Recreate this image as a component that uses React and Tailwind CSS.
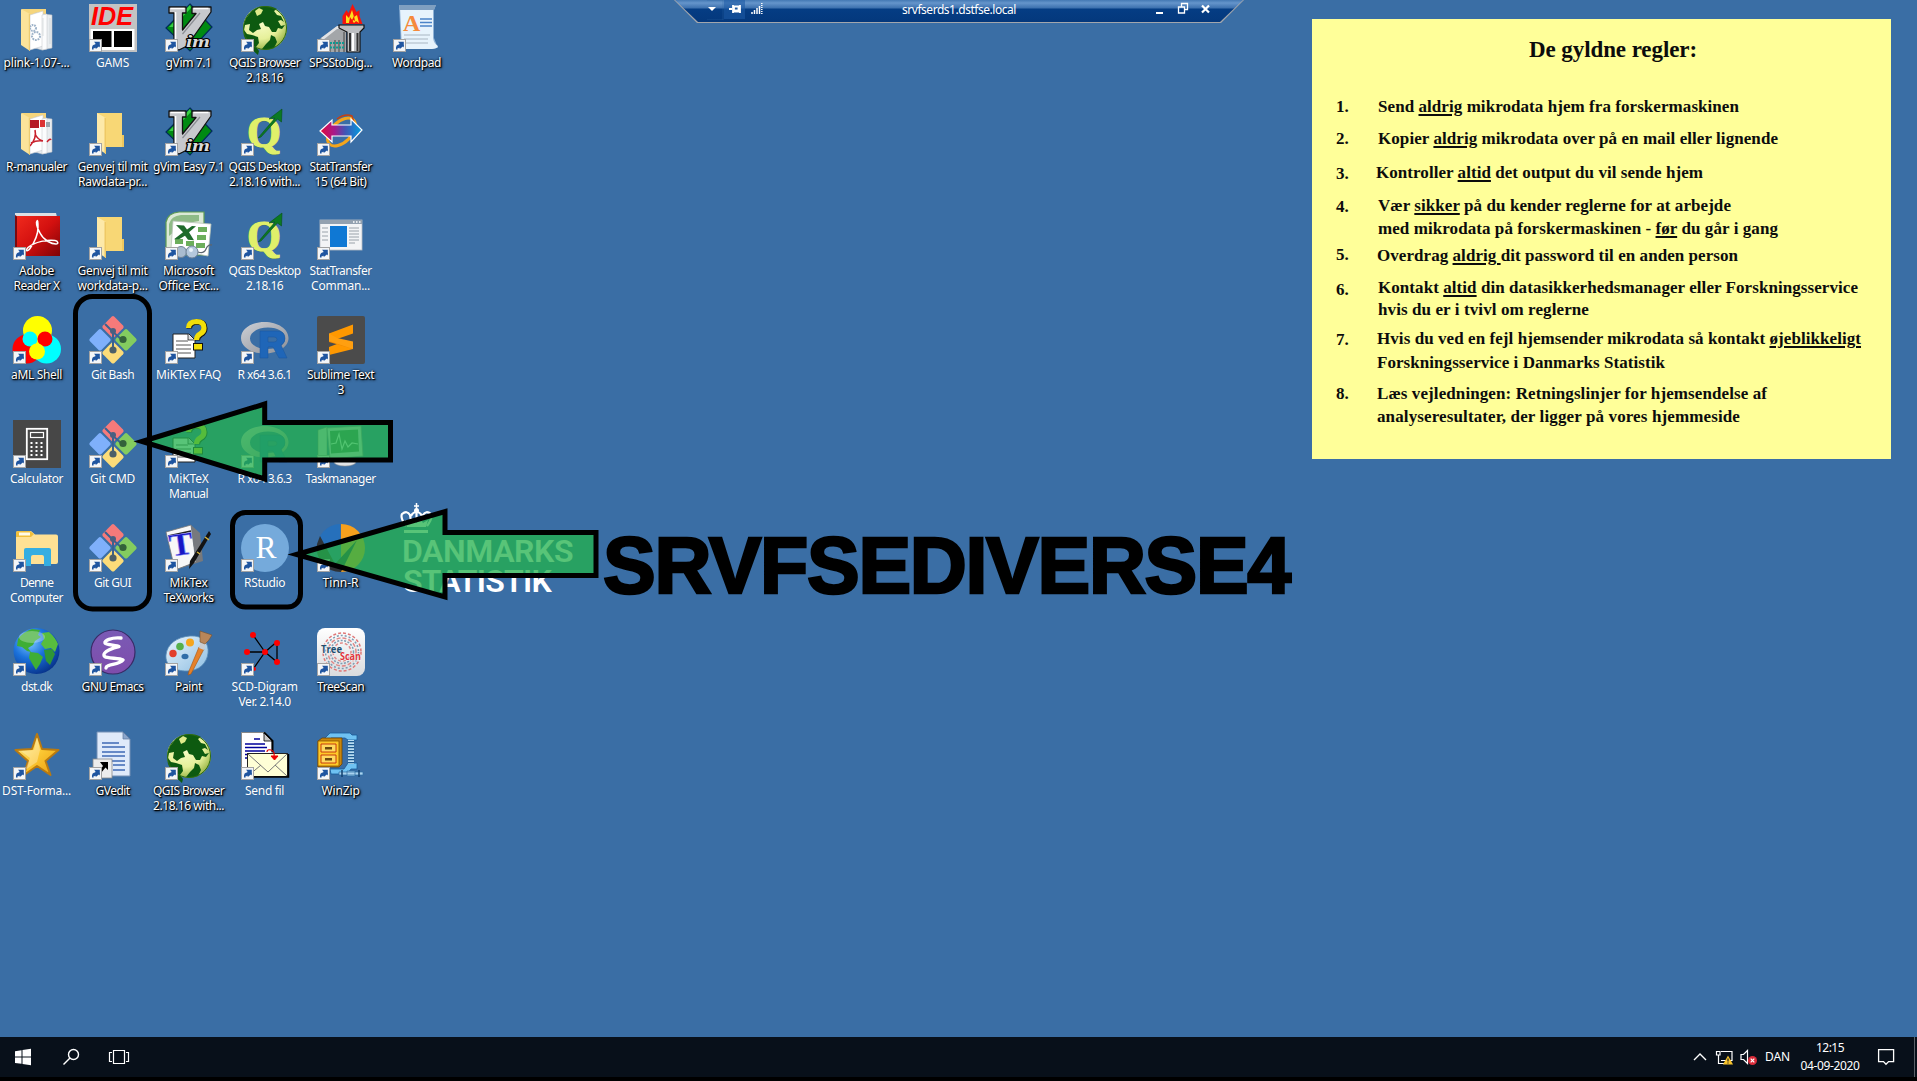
import React, { useLayoutEffect, useRef } from "react";

// Tracks the text so that it spans the given width.
function Fit({ w, className = "", children }) {
  const ref = useRef(null);
  useLayoutEffect(() => {
    const el = ref.current;
    el.style.letterSpacing = "0px";
    const natural = el.getBoundingClientRect().width;
    const n = el.textContent.length;
    el.style.letterSpacing = `${(w - natural) / n}px`;
  }, [w]);
  return (
    <span ref={ref} className={`inline-block whitespace-nowrap ${className}`}>
      {children}
    </span>
  );
}

const Svg = ({ children }) => (
  <svg viewBox="0 0 48 48" width="48" height="48" className="block overflow-visible">
    {children}
  </svg>
);

const Badge = () => (
  <g>
    <rect x="0.5" y="35.5" width="12" height="12" fill="#f4f6f8" stroke="#a3a3a3" />
    <path d="M3 45.5C2.6 42 4 40.3 6.6 40.2V38L11 41.6L6.8 45V43C5 43 4.4 44 4.6 45.5Z" fill="#1f55a0" />
    <path d="M5 37.8h5.8v5.6L8.8 41.5 6 44.5 4.2 43 7 40Z" fill="#1f55a0" />
  </g>
);

const FolderBase = () => (
  <g>
    <path d="M8 5h25v22h2v12H8Z" fill="#f8d775" />
    <path d="M8 5l9 5v36l-9-6Z" fill="#fde9a9" />
    <path d="M15.5 9.5l1.5.8v35.6l-1.5-1Z" fill="#efc965" />
    <path d="M33 27h2v12h-2Z" fill="#efc75e" />
  </g>
);

const FolderDocs = ({ pdf }) => (
  <Svg>
    <path d="M9 5h24v36H9Z" fill="#f5d57c" />
    <path d="M22 9l17 2v33l-10 2-7-2Z" fill="#e9edf0" stroke="#b9bec4" strokeWidth=".6" />
    <path d="M17 11l13-4v35l-13 4Z" fill="#fff" stroke="#c9cdd1" strokeWidth=".6" />
    <path d="M29 11l5-1v35l-5 1Z" fill="#fbfcfd" stroke="#c0c5ca" strokeWidth=".5" />
    {pdf ? (
      <g fill="none" stroke="#c8202c">
        <rect x="17" y="12" width="9" height="8" fill="#b51a26" stroke="none" />
        <rect x="27" y="12" width="5" height="7" fill="#d33" stroke="none" />
        <path d="M22 22q2 8-5 16M22 26q3 6 8 7M18 35q6-3 12-2" strokeWidth="1.6" />
        <path d="M34 34q3-4 4-2" strokeWidth="1.4" />
        <rect x="33" y="14" width="4" height="5" fill="#9aa3ab" stroke="none" />
      </g>
    ) : (
      <g fill="none" stroke="#9db2c8" strokeWidth="2">
        <circle cx="20" cy="24" r="3" strokeDasharray="1.6 .9" />
        <circle cx="23" cy="32" r="4" strokeDasharray="1.8 .9" />
        <path d="M30 14v18M37 14v26" stroke="#c6ccd2" strokeWidth=".6" />
      </g>
    )}
    <path d="M8 5l9 5v37l-9-6Z" fill="#fce39a" />
    <path d="M15.8 9.5l1.2.8v36.6l-1.2-.8Z" fill="#eccb72" />
  </Svg>
);

const Folder = () => (
  <Svg>
    <FolderBase />
    <Badge />
  </Svg>
);

const Gams = () => (
  <Svg>
    <rect width="48" height="48" fill="#c3c3c3" />
    <text x="2" y="21" fontFamily="Liberation Sans" fontStyle="italic" fontWeight="700" fontSize="25" fill="#f00" textLength="42" lengthAdjust="spacingAndGlyphs">IDE</text>
    <rect x="1.5" y="25" width="44" height="21" fill="#fff" />
    <rect x="4" y="27" width="18.5" height="16" fill="#000" />
    <rect x="25" y="27" width="18" height="16" fill="#000" />
    <Badge />
  </Svg>
);

const Vim = () => (
  <Svg>
    <path d="M25 0L47 23 25 47 1 24Z" fill="#008a12" stroke="#002b5a" strokeWidth="1.2" />
    <path d="M25 1L4 23h4L26 4Z" fill="#39d145" />
    <path d="M4 3h17v6h-3.500v17L31 9.500h-4V3h19v5L22 42l-8 4-5-2V9H4Z" fill="#c7c9cd" stroke="#111" strokeWidth="1.3" strokeLinejoin="round" />
    <path d="M5.5 4.500h14M10.500 8v32M28.500 4.500h15" stroke="#fff" strokeWidth="1.6" />
    <path d="M17.500 30L35 9" stroke="#8b8e93" strokeWidth="1.2" />
    <text x="21" y="42.500" fontFamily="Liberation Serif" fontStyle="italic" fontWeight="700" fontSize="17" fill="#dadada" stroke="#000" strokeWidth="2" paintOrder="stroke" textLength="24" lengthAdjust="spacingAndGlyphs">im</text>
    <Badge />
  </Svg>
);

const QGlobe = () => (
  <Svg>
    <defs>
      <radialGradient id="qg" cx=".4" cy=".3" r=".75">
        <stop offset="0" stopColor="#fbffcf" />
        <stop offset=".6" stopColor="#e6f09a" />
        <stop offset="1" stopColor="#8fae3a" />
      </radialGradient>
    </defs>
    <circle cx="24" cy="24" r="22" fill="url(#qg)" />
    <path d="M10 8Q16 2 24 2q7 0 12 3l-3 2 3 4 4 1 3 6-3-2-3 1 3 5 4-1-3 4-4-1-2 4-4 0-3-5-4-1-2-4-4 2 2 5-4 1-4 3-4-3 1-6-5 1-1 5 3 4 5 1 6 2 1 6-3 4 3 4-1 4Q8 44 3 32 1 22 5 14Z" fill="#0d5a10" />
    <path d="M30 31l4 2 2 5-3 6q-7 3-12 1l4-5 4-4Z" fill="#0d5a10" />
    <path d="M14 7l4-3 4 2-2 4-4 2Z" fill="#dfeb8a" />
    <circle cx="24" cy="24" r="21.500" fill="none" stroke="#2c6a14" strokeWidth="1" />
    <Badge />
  </Svg>
);

const QDesk = () => (
  <Svg>
    <text x="6.500" y="40" fontFamily="Liberation Serif" fontWeight="700" fontSize="44" fill="#4e6b1c" opacity=".55" textLength="34" lengthAdjust="spacingAndGlyphs">Q</text>
    <text x="6" y="39" fontFamily="Liberation Serif" fontWeight="700" fontSize="44" fill="#e0f06a" stroke="#e0f06a" strokeWidth="1.200" textLength="34" lengthAdjust="spacingAndGlyphs">Q</text>
    <path d="M17 30L34 10l-6 1L41 1l-.5 13-4-3L20 29Z" fill="#0b7a22" stroke="#065015" strokeWidth=".6" />
    <Badge />
  </Svg>
);

const Spss = () => (
  <Svg>
    <path d="M0 37L19 23h10v25H0Z" fill="#a3a6a9" />
    <path d="M4 34L20 22h8v3H20L6 36Z" fill="#e2e3e5" />
    <path d="M13 38v10M18 36v12M22 36v12M27 28v20" stroke="#555" strokeWidth="1.2" />
    <path d="M13 39h14M13 43.500h14" stroke="#0c9a90" strokeWidth="2" strokeDasharray="2 1" />
    <path d="M22 21h25v3l-4 4v20H30V28l-8-4Z" fill="#bdbfc2" stroke="#111" strokeWidth="1.2" />
    <path d="M33 29v18M40.500 29v18" stroke="#333" strokeWidth="2" />
    <path d="M36 29v18" stroke="#fff" strokeWidth="2" />
    <path d="M25.500 20l0-8 4-6 2 3 4-9 4 8 3-2 0 6 3 8Z" fill="#f5150c" />
    <path d="M29 19l0-8 3 3 3-8 2 7 3-2 2 8-3-2-2 2-3-4-2 4Z" fill="#ffdf1c" />
    <path d="M32 19l1-6 2 3 2-4 1 5-2-1-1 3Z" fill="#f5150c" />
    <Badge />
  </Svg>
);

const Wordpad = () => (
  <Svg>
    <path d="M6 1h37l-2 5v28l4 10H8Z" fill="#8fb2d6" />
    <path d="M7 3h33v31q1 6 5 8-1 3-6 3H9Z" fill="#e7f3fc" />
    <path d="M6 1h37l-2 5H7Z" fill="#7f9fc0" />
    <text x="10" y="27" fontFamily="Liberation Serif" fontWeight="700" fontSize="24" fill="#f58a3c">A</text>
    <path d="M27 15h12M27 18.500h12M27 22h12" stroke="#4b84c8" strokeWidth="1.6" />
    <path d="M11 31h26M11 35h24M13 39h22" stroke="#a9b6c2" strokeWidth="1" />
    <Badge />
  </Svg>
);

const StatTransfer = () => (
  <Svg>
    <defs>
      <linearGradient id="sa">
        <stop offset="0" stopColor="#e3093a" />
        <stop offset=".35" stopColor="#a51a8c" />
        <stop offset=".6" stopColor="#3f55b5" />
        <stop offset="1" stopColor="#009fe0" />
      </linearGradient>
    </defs>
    <ellipse cx="24.500" cy="24" rx="17" ry="10" fill="none" stroke="#f3a51c" strokeWidth="3" transform="rotate(-45 24.500 24)" />
    <path d="M20 11q8-6 15-3l2 6" fill="none" stroke="#c8400f" strokeWidth="1.4" />
    <path d="M3 23L15 12v5h19v-6l11 11-11 12v-6H15v6Z" fill="url(#sa)" stroke="#fff" strokeWidth="1.2" />
    <Badge />
  </Svg>
);

const Adobe = () => (
  <Svg>
    <defs>
      <linearGradient id="ad" x1="0" y1="0" x2="1" y2="1">
        <stop offset="0" stopColor="#f02a1d" />
        <stop offset=".5" stopColor="#d3100f" />
        <stop offset="1" stopColor="#7d0307" />
      </linearGradient>
    </defs>
    <path d="M2 1h41l1 4H5v38H2Z" fill="#dce0e4" />
    <path d="M2 3l3 2v37l-3-2Z" fill="#7b0a0e" />
    <rect x="4" y="4" width="43" height="40" fill="url(#ad)" />
    <path d="M24 9c-2 3 1 8 3 12 4 8 12 11 16 11 3 0 2-3-1-3.500-7-1-20 1-27 7-3 3-1 5 2 1 5-7 8-15 8-21 0-6-.5-8-1-6.500Z" fill="none" stroke="#fff" strokeWidth="1.500" />
    <Badge />
  </Svg>
);

const Excel = () => (
  <Svg>
    <path d="M1 43V10Q3 1 14 0h25v43Z" fill="#dbe9d6" stroke="#5e9c52" strokeWidth="1.2" />
    <path d="M4 24V12q2-8 12-9h18v6Q20 10 4 24Z" fill="#8fbb87" />
    <path d="M8 9l38 3-3 32-37-7Z" fill="#fff" stroke="#b8c4b6" strokeWidth=".8" />
    <path d="M33 15h9v5h-9ZM32 23h9v5h-9ZM31 31h9v5h-9ZM21 29h8v5h-8ZM10 27h8v5h-8Z" fill="#6cae5c" />
    <path d="M11 13l8 .5 3 4 5-3.500 4 .2-7 6 5 8-6-.5-3-4-6 3.500H9l9-7Z" fill="#1f6b2c" />
    <path d="M18 38h15" stroke="#a5adb5" strokeWidth="2" />
    <circle cx="16" cy="40" r="5.500" fill="#a9bcd0" stroke="#6f8298" />
    <circle cx="27" cy="40" r="6" fill="#b4c8dd" stroke="#6f8298" />
    <circle cx="26" cy="38" r="2" fill="#eaf3fb" />
    <path d="M33 40q6 2 8-3t6-4" fill="none" stroke="#5c6670" strokeWidth="1.300" />
    <Badge />
  </Svg>
);

const Command = () => (
  <Svg>
    <rect x="3" y="8" width="42" height="30" fill="#f3f4f6" stroke="#b6bcc4" strokeWidth=".8" />
    <rect x="3" y="8" width="42" height="4" fill="#93a1b0" />
    <path d="M36 10h1.500M39 10h1.500M42 10h1.500" stroke="#fff" strokeWidth="1.500" />
    <rect x="13" y="14" width="17" height="21" fill="#0f78d4" />
    <path d="M5 16h6M5 20h6M5 24h6M5 28h6M32 16h10M32 19h10M32 22h10M32 25h10M32 28h10M32 31h6" stroke="#9aa2aa" strokeWidth="1" />
    <Badge />
  </Svg>
);

const Aml = () => (
  <Svg>
    <circle cx="14" cy="33" r="14.500" fill="#f00" />
    <circle cx="33.500" cy="33" r="14.500" fill="#0ff" />
    <circle cx="24.500" cy="14.500" r="14.500" fill="#ff0" />
    <circle cx="17" cy="23" r="7.500" fill="#0ff" />
    <circle cx="32" cy="23" r="7.500" fill="#f00" />
    <circle cx="24" cy="35.500" r="8" fill="#ff0" />
    <Badge />
  </Svg>
);

const Git = () => (
  <Svg>
    <g transform="rotate(45 24 24)">
      <rect x="6.600" y="6.600" width="16.200" height="16.200" rx="2" fill="#f67a7a" />
      <rect x="25" y="6.600" width="16.200" height="16.200" rx="2" fill="#84cc5f" />
      <rect x="6.600" y="25" width="16.200" height="16.200" rx="2" fill="#7fb0fb" />
      <rect x="25" y="25" width="16.200" height="16.200" rx="2" fill="#fcdc79" />
    </g>
    <path d="M16 8l8 8v16M24 16l8 7" stroke="#3a6290" strokeWidth="2" fill="none" />
    <circle cx="24" cy="15" r="3" fill="#4a5f80" />
    <circle cx="34" cy="23.500" r="3.600" fill="#34623a" />
    <circle cx="24" cy="34" r="3.600" fill="#4d6068" />
    <Badge />
  </Svg>
);

const Miktex = () => (
  <Svg>
    <path d="M8 18h16l6 6v18H8Z" fill="#fff" stroke="#222" strokeWidth="1" />
    <path d="M23 18v6h6" fill="#ddd" stroke="#222" strokeWidth=".8" />
    <path d="M11 25h12M11 29h15M11 33h15M11 37h15" stroke="#555" strokeWidth="1" />
    <path d="M23.500 12q0-6 8-6.500 7.500 0 7.500 6.500 0 4-4 6-3.500 2-3.500 6" transform="translate(.8 .6)" fill="none" stroke="#111" strokeWidth="5.500" />
    <path d="M23.500 12q0-6 8-6.500 7.500 0 7.500 6.500 0 4-4 6-3.500 2-3.500 6" fill="none" stroke="#f2df08" strokeWidth="5.200" />
    <rect x="28.500" y="27.500" width="9" height="6.500" fill="#f2df08" stroke="#111" strokeWidth="1" />
    <Badge />
  </Svg>
);

const RLogo = () => (
  <Svg>
    <defs>
      <linearGradient id="rg" x1="0" y1="0" x2="1" y2="1">
        <stop offset="0" stopColor="#cdd0d6" />
        <stop offset="1" stopColor="#8d9097" />
      </linearGradient>
    </defs>
    <path fillRule="evenodd" d="M23.500 6C37 6 47.500 13 47.500 22S37 37.500 23.500 37.500 0 31 0 22 10 6 23.500 6ZM27 11.500C17 11.500 9 16 9 22.500S17 33 27 33s17-3.500 17-10.500-7-11-17-11Z" fill="url(#rg)" />
    <path fillRule="evenodd" d="M19 15h17q8 0 8 7.500 0 4.500-4 6.500l6 13h-8l-6-11h-5v11h-8ZM27 21v5h6q3 0 3-2.500T33 21Z" fill="#1f66b8" stroke="#1a569d" strokeWidth=".5" />
    <Badge />
  </Svg>
);

const Sublime = () => (
  <Svg>
    <rect width="48" height="48" rx="2" fill="#4b4b4b" />
    <path d="M12 17.500L36 8.500v9l-16 5.500 16 5v5L12 39v-8l16-6-16-4.500Z" fill="#ff9800" />
    <path d="M12 20.500L36 28v5L12 26Z" fill="#f08a00" />
    <path d="M12 17.500v7.500l24 8v-7.500L20 22Z" fill="#ff9f10" />
    <Badge />
  </Svg>
);

const Calculator = () => (
  <Svg>
    <rect width="48" height="48" fill="#474747" />
    <rect x="13.800" y="8.800" width="20.400" height="30.400" fill="none" stroke="#fff" strokeWidth="1.800" />
    <rect x="17.500" y="12.500" width="13" height="5" fill="none" stroke="#fff" strokeWidth="1.200" />
    <path d="M17 23h15M17 27h15M17 31h15M17 35h15" stroke="#fff" strokeWidth="2" strokeDasharray="2 3" strokeDashoffset="-.5" />
    <Badge />
  </Svg>
);

const TaskMgr = () => (
  <Svg>
    <path d="M1 10l9-3v32l-9-2Z" fill="#cfd3d6" stroke="#777" strokeWidth=".6" />
    <path d="M10 8l34-2 2 30-33 3Z" fill="#d6dadd" stroke="#889" strokeWidth=".8" />
    <path d="M13 11l28-1.500 1 22-28 2Z" fill="#4d7f5a" />
    <path d="M14 24l5-1 3-9 3 15 3-8 3 6 4-4 6 1" fill="none" stroke="#dfffe0" strokeWidth="1.200" />
    <ellipse cx="28" cy="42" rx="11" ry="4" fill="#e3e5e7" stroke="#999" strokeWidth=".6" />
    <Badge />
  </Svg>
);

const Computer = () => (
  <Svg>
    <path d="M3 9q0-2 2-2h13l4 3.500h21q2 0 2 2V38q0 2-2 2H5q-2 0-2-2Z" fill="#ffe194" />
    <path d="M3 9q0-2 2-2h12l4 3-3 3H3Z" fill="#f0bf3c" />
    <rect x="6" y="8.500" width="11" height="3" fill="#fffbe8" />
    <path d="M11 42V26q0-2 2-2h23q2 0 2 2v16h-7v-9q0-2-2-2h-9q-2 0-2 2v9Z" fill="#35aee2" />
    <Badge />
  </Svg>
);

const TexWorks = () => (
  <Svg>
    <path d="M1 8L26 1l5 37-21 8Z" fill="#f7f7f7" stroke="#777" strokeWidth=".8" />
    <path d="M26 1l9 8 3 28-28 9 21-8Z" fill="#77797d" />
    <path d="M3 12l23-5" stroke="#222" strokeWidth="1.500" />
    <text x="4" y="31" fontFamily="Liberation Serif" fontWeight="700" fontSize="32" fill="#1717c4" stroke="#8f8ff5" strokeWidth=".6" transform="rotate(-8 15 20)" textLength="24" lengthAdjust="spacingAndGlyphs">T</text>
    <path d="M44 7l2 3-17 29-5 6 1-8Z" fill="#131313" />
    <path d="M40 13l4 3M32 28l3 2" stroke="#d8b23a" strokeWidth="1.500" />
    <Badge />
  </Svg>
);

const RStudio = () => (
  <Svg>
    <circle cx="24" cy="24" r="24" fill="#75aadb" />
    <text x="14.500" y="33.500" fontFamily="Liberation Serif" fontSize="32" fill="#fff" textLength="21" lengthAdjust="spacingAndGlyphs">R</text>
    <Badge />
  </Svg>
);

const TinnR = () => (
  <Svg>
    <path d="M23 0A24 24 0 0 0 0 24L23 20Z" fill="#2670bb" />
    <path d="M24 0A24 24 0 0 1 48 24 24 24 0 0 1 24 48Z" fill="#f7a01d" />
    <path d="M0 20l3-8L18 40 40 16 24 48A24 24 0 0 1 0 20Z" fill="#2e3236" />
    <Badge />
  </Svg>
);

const DstGlobe = () => (
  <Svg>
    <defs>
      <radialGradient id="dg" cx=".35" cy=".3" r=".8">
        <stop offset="0" stopColor="#7cc8ff" />
        <stop offset=".45" stopColor="#1b72dc" />
        <stop offset="1" stopColor="#042a80" />
      </radialGradient>
    </defs>
    <circle cx="23.500" cy="23" r="23" fill="url(#dg)" />
    <path d="M5 11q5-7 14-10l8 1-2 5 3 2-6 4-2 4-5 3 3 4-4-1-5-4-5-1ZM17 24l8 1 5 4-3 7-4 6-3-5-4-7Z" fill="#3fae35" />
    <path d="M29 5l7-1q6 5 9 12l-3 8-4-4-6 1-4-5 3-5Z" fill="#58bd3e" />
    <path d="M31 22l8-1 3 5-5 11-4-4Z" fill="#2f9636" />
    <ellipse cx="19" cy="9" rx="13" ry="6" fill="#fff" opacity=".28" />
    <Badge />
  </Svg>
);

const Emacs = () => (
  <Svg>
    <defs>
      <linearGradient id="em" x1="0" y1="0" x2="0" y2="1">
        <stop offset="0" stopColor="#7a5bb5" />
        <stop offset="1" stopColor="#7e4cab" />
      </linearGradient>
    </defs>
    <circle cx="24" cy="24" r="22" fill="url(#em)" stroke="#392a66" strokeWidth="1.200" />
    <path d="M32 10C22 9 15 13 16 15S28 17 30 18.500C24 19.500 14 24 15 27.500S30 29.500 34 32C30 37 17 36 17 40" fill="none" stroke="#fff" strokeWidth="3.400" strokeLinecap="round" strokeLinejoin="round" />
    <Badge />
  </Svg>
);

const Paint = () => (
  <Svg>
    <defs>
      <linearGradient id="pg" x1="0" y1="0" x2="1" y2="1">
        <stop offset="0" stopColor="#e8f4fc" />
        <stop offset="1" stopColor="#8fbfe3" />
      </linearGradient>
    </defs>
    <path d="M25 8C38 7 44 15 43 25S34 43 22 43C10 43 0 38 1 27S12 9 25 8Z" fill="url(#pg)" stroke="#5c8fba" strokeWidth=".8" />
    <ellipse cx="20" cy="28.500" rx="3.500" ry="2.800" fill="#2f6da8" />
    <circle cx="8" cy="25.500" r="3.700" fill="#e23f2d" />
    <circle cx="15" cy="18.500" r="3.800" fill="#55b04b" />
    <circle cx="25" cy="14.500" r="4" fill="#f5a51d" />
    <path d="M34 19l5 2-13 25-3 1 1-4Z" fill="#e5812a" stroke="#a55512" strokeWidth=".6" />
    <path d="M36 13l5 2-2 7-5-2Z" fill="#c9ccd0" />
    <path d="M35 3l12 4q-3 6-7 9l-5-2Z" fill="#b98659" stroke="#77512c" strokeWidth=".6" />
    <Badge />
  </Svg>
);

const Scd = () => (
  <Svg>
    <path d="M12 7L24 24M6 24h18L35 14.500M24 24l12 10V15M24 24L13 40" stroke="#000" strokeWidth="1.300" fill="none" />
    <g fill="#f00">
      <circle cx="12" cy="7" r="3" />
      <circle cx="6" cy="24" r="3" />
      <circle cx="24" cy="24" r="3" />
      <circle cx="36" cy="15" r="3" />
      <circle cx="36" cy="34" r="3" />
      <circle cx="13" cy="41" r="2" />
    </g>
    <Badge />
  </Svg>
);

const TreeScan = () => (
  <Svg>
    <defs>
      <linearGradient id="tg" x1="0" y1="0" x2="0" y2="1">
        <stop offset="0" stopColor="#fff" />
        <stop offset="1" stopColor="#d9dbde" />
      </linearGradient>
    </defs>
    <rect width="48" height="48" rx="8" fill="url(#tg)" />
    <g fill="none" strokeWidth="1.500">
      <circle cx="25" cy="24" r="19" stroke="#e07878" strokeDasharray="3 2" />
      <circle cx="25" cy="24" r="16.500" stroke="#7d9cb2" strokeDasharray="2 2" />
      <circle cx="25" cy="24" r="14" stroke="#e08a8a" strokeDasharray="4 2" />
      <circle cx="25" cy="24" r="11.500" stroke="#7d9cb2" strokeDasharray="2 1.500" />
      <circle cx="25" cy="24" r="9" stroke="#e08a8a" strokeDasharray="3 2" />
    </g>
    <text x="4" y="25" fontFamily="Open Sans" fontWeight="700" fontSize="11" fill="#1e4f70" stroke="#f5f5f5" strokeWidth="1.200" paintOrder="stroke" textLength="21" lengthAdjust="spacingAndGlyphs">Tree</text>
    <text x="23" y="31.500" fontFamily="Open Sans" fontWeight="700" fontSize="10.500" fill="#e0353d" stroke="#f5f5f5" strokeWidth="1.200" paintOrder="stroke" textLength="21" lengthAdjust="spacingAndGlyphs">Scan</text>
    <Badge />
  </Svg>
);

const Star = () => (
  <Svg>
    <defs>
      <linearGradient id="sg" x1="0" y1="0" x2="1" y2="1">
        <stop offset="0" stopColor="#fff3a0" />
        <stop offset=".5" stopColor="#fcc934" />
        <stop offset="1" stopColor="#e89a0c" />
      </linearGradient>
    </defs>
    <path d="M24 2l5 15 16.500 1-13 11 5 14-13.500-9-13 9 4-14L2.500 18l16.500-1Z" fill="url(#sg)" stroke="#b97a10" strokeWidth="2" strokeLinejoin="round" />
    <path d="M24 5l3 13-3 12-12 8 5-12-9-7 13-1Z" fill="#fff" opacity=".3" />
    <Badge />
  </Svg>
);

const GvEdit = () => (
  <Svg>
    <path d="M8 0h26l7 7v37H8Z" fill="#dfeafa" stroke="#7590b5" strokeWidth="1" />
    <path d="M34 0v7h7Z" fill="#8ba6cc" stroke="#5b769c" strokeWidth=".7" />
    <path d="M13 11h17M13 15h23M13 20h23M13 24h23M13 29h23M24 33h12M24 38h12" stroke="#3f69b5" strokeWidth="1.600" />
    <rect x="4" y="27" width="19" height="19" fill="#ededed" stroke="#8a8a8a" strokeWidth=".8" />
    <path d="M11 30h8v8l-2.500-2.500L12 41l-2-2 4-5Z" fill="#000" />
    <Badge />
  </Svg>
);

const SendFile = () => (
  <Svg>
    <path d="M0.500 0.500H23l8 8v27H.5Z" fill="#fff" stroke="#888" />
    <path d="M23 .5l8.500 8.500V20" fill="none" stroke="#000" strokeWidth="2" />
    <path d="M23 1v8h8Z" fill="#c8c8c8" stroke="#000" strokeWidth=".8" />
    <path d="M13 7h6M4 12h20M4 15.500h22M4 19h20M4 22.500h3M4 26h3" stroke="#00009a" strokeWidth="1.300" />
    <rect x="6.500" y="21.500" width="40" height="23" fill="#ffffd6" stroke="#222" />
    <path d="M7 45h40.500V22" fill="none" stroke="#000" strokeWidth="1.500" />
    <path d="M7 22l20 18L46 22M7 44l13-11M46 44L34 33" fill="none" stroke="#777" strokeWidth="1" />
    <path d="M26 20q0-3 4-2 4 1 3 7" fill="none" stroke="#d00" strokeWidth="1.200" />
    <path d="M30 24h7l-3.500 4Z" fill="#e00" stroke="#e00" />
    <Badge />
  </Svg>
);

const WinZip = () => (
  <Svg>
    <path d="M8 6L13 1h20l2 2h5v5h-9l-3-2H14l-3 3Z" fill="#6fc2f2" stroke="#165a99" strokeWidth=".8" />
    <path d="M13 37h14l4-6h9v6h-6l-4 5H14Z" fill="#6fc2f2" stroke="#165a99" strokeWidth=".8" />
    <path d="M34 8v24" stroke="#b9dcf2" strokeWidth="6" />
    <path d="M34 9v23" stroke="#1e5c92" strokeWidth="6.500" strokeDasharray="1.200 1.800" />
    <path d="M30 39h8v5h-8ZM22 40h24v3H22Z" fill="#a9d3ef" stroke="#2d6ea5" strokeWidth=".7" />
    <path d="M25 38v7M42 38v7" stroke="#12406e" strokeWidth="1.500" />
    <path d="M1 9l4-3h20v26l-3 3H1Z" fill="#c8860d" stroke="#6e4300" strokeWidth=".8" />
    <rect x="1" y="9" width="21" height="25" fill="#ffc928" stroke="#8a5600" strokeWidth=".8" />
    <path d="M4 12h15v8H4ZM4 23h15v8H4Z" fill="#ffd95e" stroke="#c02a0a" strokeWidth=".9" />
    <path d="M8 15h7v2.500H8ZM8 26h7v2.500H8Z" fill="#6b4a10" />
    <Badge />
  </Svg>
);

// Each label line is [text, width in px].
const icons = [
  [() => <FolderDocs />, [["plink-1.07-...", 66]], true],
  [() => <FolderDocs pdf />, [["R-manualer", 61]], true],
  [Adobe, [["Adobe", 35], ["Reader X", 46]], true],
  [Aml, [["aML Shell", 51]], true],
  [Calculator, [["Calculator", 53]], false],
  [Computer, [["Denne", 33], ["Computer", 53]], false],
  [DstGlobe, [["dst.dk", 31]], false],
  [Star, [["DST-Forma...", 69]], false],

  [Gams, [["GAMS", 33]], false],
  [Folder, [["Genvej til mit", 70], ["Rawdata-pr...", 69]], true],
  [Folder, [["Genvej til mit", 70], ["workdata-p...", 70]], true],
  [Git, [["Git Bash", 43]], false],
  [Git, [["Git CMD", 45]], false],
  [Git, [["Git GUI", 37]], false],
  [Emacs, [["GNU Emacs", 62]], true],
  [GvEdit, [["GVedit", 34]], true],

  [Vim, [["gVim 7.1", 46]], true],
  [Vim, [["gVim Easy 7.1", 71]], true],
  [Excel, [["Microsoft", 51], ["Office Exc...", 60]], true],
  [Miktex, [["MiKTeX FAQ", 65]], false],
  [Miktex, [["MiKTeX", 40], ["Manual", 39]], false],
  [TexWorks, [["MikTex", 38], ["TeXworks", 50]], true],
  [Paint, [["Paint", 27]], true],
  [QGlobe, [["QGIS Browser", 71], ["2.18.16 with...", 71]], true],

  [QGlobe, [["QGIS Browser", 71], ["2.18.16", 37]], true],
  [QDesk, [["QGIS Desktop", 72], ["2.18.16 with...", 71]], true],
  [QDesk, [["QGIS Desktop", 72], ["2.18.16", 37]], false],
  [RLogo, [["R x64 3.6.1", 54]], false],
  [RLogo, [["R x64 3.6.3", 54]], false],
  [RStudio, [["RStudio", 41]], false],
  [Scd, [["SCD-Digram", 66], ["Ver. 2.14.0", 52]], false],
  [SendFile, [["Send fil", 39]], false],

  [Spss, [["SPSStoDig...", 63]], true],
  [StatTransfer, [["StatTransfer", 62], ["15 (64 Bit)", 52]], true],
  [Command, [["StatTransfer", 62], ["Comman...", 59]], false],
  [Sublime, [["Sublime Text", 67], ["3", 6]], true],
  [TaskMgr, [["Taskmanager", 70]], false],
  [TinnR, [["Tinn-R", 36]], true],
  [TreeScan, [["TreeScan", 47]], true],
  [WinZip, [["WinZip", 38]], true],

  [Wordpad, [["Wordpad", 49]], true],
];

function DesktopIcon({ icon: Icon, lines, shadow }) {
  return (
    <div className="flex flex-col items-center">
      <Icon />
      <div
        className={`mr-[0.8px] mt-[3px] flex flex-col items-center font-['Noto_Sans',sans-serif] text-[12px] leading-[15px] text-white ${
          shadow ? "[text-shadow:1px_1px_1px_#000,1px_1px_3px_#000,0_0_2px_rgba(0,0,0,.8)]" : "[text-shadow:0_0_1px_rgba(20,50,90,.5)]"
        }`}
      >
        {lines.map(([t, w], i) => (
          <Fit key={i} w={w}>{t}</Fit>
        ))}
      </div>
    </div>
  );
}

const U = ({ children }) => (
  <span className="underline decoration-2 underline-offset-[2px]">{children}</span>
);

const rules = [
  { mt: "mt-[33px]", n: "", lines: [["ml-px", 361, <>Send <U>aldrig</U> mikrodata hjem fra forskermaskinen</>]] },
  { mt: "mt-[12px]", n: "", lines: [["ml-px", 400, <>Kopier <U>aldrig</U> mikrodata over på en mail eller lignende</>]] },
  { mt: "mt-[14px]", n: "mt-px", lines: [["-ml-px", 327, <>Kontroller <U>altid</U> det output du vil sende hjem</>]] },
  { mt: "mt-[12px]", n: "mt-px", lines: [["ml-px", 353, <>Vær <U>sikker</U> på du kender reglerne for at arbejde</>], ["ml-px mt-[3px]", 400, <>med mikrodata på forskermaskinen - <U>før</U> du går i gang</>]] },
  { mt: "mt-[7px]", n: "-mt-px", lines: [["", 361, <>Overdrag <U>aldrig </U>dit password til en anden person</>]] },
  { mt: "mt-[12px]", n: "mt-[2px]", lines: [["ml-px", 480, <>Kontakt <U>altid</U> din datasikkerhedsmanager eller Forskningsservice</>], ["ml-px mt-[2px]", 211, "hvis du er i tvivl om reglerne"]] },
  { mt: "mt-[9px]", n: "mt-px", lines: [["", 484, <>Hvis du ved en fejl hjemsender mikrodata så kontakt <U>øjeblikkeligt</U></>], ["mt-[4px]", 288, "Forskningsservice i Danmarks Statistik"]] },
  { mt: "mt-[11px]", n: "", lines: [["", 390, "Læs vejledningen: Retningslinjer for hjemsendelse af"], ["mt-[3px]", 363, "analyseresultater, der ligger på vores hjemmeside"]] },
];

function Rules() {
  return (
    <section className="h-[440px] w-[579px] shrink-0 bg-[#ffff99] pt-[17px] font-['Liberation_Serif',serif] font-bold text-[#0c0c0c]">
      <h1 className="pl-[217px] text-[23px] leading-[28px]">
        <Fit w={168}>De gyldne regler:</Fit>
      </h1>
      {rules.map((r, i) => (
        <div key={i} className={`flex pl-[24px] text-[17px] leading-[20px] ${r.mt}`}>
          <div className={`w-[41px] shrink-0 ${r.n}`}>{i + 1}.</div>
          <div className="flex flex-col items-start">
            {r.lines.map(([cls, w, text], j) => (
              <Fit key={j} w={w} className={cls}>{text}</Fit>
            ))}
          </div>
        </div>
      ))}
    </section>
  );
}

function ConnectionBar() {
  return (
    <div className="absolute left-[674px] top-0 h-[23px] w-[570px] bg-[#a3a6ac] [clip-path:polygon(0_0,100%_0,547px_100%,23px_100%)]">
      <div className="flex h-[22px] items-start bg-[linear-gradient(#4479b4_0px,#6595cb_3px,#3c70ae_8px,#053d84_9px,#04387c_22px)] pl-[33px] text-white [clip-path:polygon(1px_0,569px_0,546px_100%,24px_100%)]">
        <svg width="80" height="20" viewBox="0 0 80 20" className="block">
          <rect x="-6" y="0" width="22" height="20" fill="none" stroke="#2f64a3" strokeWidth=".7" opacity=".6" />
          <rect x="17" y="0" width="21" height="19" fill="#1c5aa5" opacity=".6" />
          <path d="M1 7h8L5 11Z" fill="#fff" />
          <path d="M22 9h3M26 5v8M27 6.500h4.500v5H27ZM33 5v8M27 10.500h6" stroke="#fff" strokeWidth="1.800" fill="none" />
          <path d="M45 14v-2M47.500 14v-4M50 14V8M52.500 14V6" stroke="#fff" strokeWidth="1.500" />
          <path d="M54.800 14V3" stroke="#fff" strokeWidth="1.500" strokeDasharray="1 1" />
        </svg>
        <div className="ml-[115px] w-[240px] pt-[2px] font-['Noto_Sans',sans-serif] text-[12px] leading-[15px]">
          <Fit w={114}>srvfserds1.dstfse.local</Fit>
        </div>
        <svg width="60" height="20" viewBox="0 0 60 20" className="ml-[13px] block">
          <path d="M1 13h7" stroke="#fff" strokeWidth="2" />
          <path d="M23.500 7h6v6h-6Z M26.500 6.500V3.500h6v6h-3" stroke="#fff" fill="none" strokeWidth="1.300" />
          <path d="M47 5.500l7 7M54 5.500l-7 7" stroke="#fff" strokeWidth="2.200" />
        </svg>
      </div>
    </div>
  );
}

function StatLogo() {
  return (
    <div className="absolute left-[400px] top-[502px] flex flex-col items-start font-['Roboto',sans-serif] text-[32px] font-semibold leading-[30px] text-white">
      <svg width="34" height="32" viewBox="0 0 34 32" className="block">
        <path d="M16.500 1v8M14 4h5" stroke="#fff" strokeWidth="1.500" />
        <circle cx="16.500" cy="8.500" r="2.500" fill="#fff" />
        <path d="M6 24Q0 16 2 12q5-4 8 1l1 6M27 24q6-8 4-12-5-4-8 1l-1 6M11 14q2-4 5.500-4t5.500 4M16.500 11v9" fill="none" stroke="#fff" strokeWidth="2.200" />
        <path d="M5 18l5 3 3-4 3.500 4 3.500-4 3 4 5-3-2 7H7Z" fill="#fff" />
        <rect x="4" y="28" width="24" height="3" fill="#fff" />
      </svg>
      <div className="mt-[2px] pl-[2px]"><Fit w={171}>DANMARKS</Fit></div>
      <div className="pl-[3px]"><Fit w={148}>STATISTIK</Fit></div>
    </div>
  );
}

function Annotations() {
  return (
    <>
      <svg width="620" height="640" viewBox="0 0 620 640" className="absolute left-0 top-0">
        <g stroke="#000" strokeWidth="5">
          <g fill="rgb(34,177,76)" fillOpacity=".755" strokeMiterlimit="10">
            <path d="M142 441.500L264.700 404V422.500H390.500V460H264.700V479Z" />
            <path d="M296.500 554.500L445 511.500V532.500H596V575.500H445V597Z" />
          </g>
          <rect x="75.500" y="296.500" width="74" height="312.500" rx="17" fill="none" />
          <rect x="232.500" y="512.500" width="68" height="94.500" rx="13" fill="none" />
        </g>
      </svg>
      <div className="absolute left-[603px] top-[520px] font-['Liberation_Sans',sans-serif] text-[79px] font-bold leading-[92px] text-black [-webkit-text-stroke:2.5px_#000]">
        <Fit w={687}>SRVFSEDIVERSE4</Fit>
      </div>
    </>
  );
}

function Taskbar() {
  return (
    <footer className="flex h-[44px] shrink-0 items-start border-b-4 border-black bg-[#08101a] font-['Noto_Sans',sans-serif] text-[12px] text-white">
      <svg width="140" height="40" viewBox="0 0 140 40" className="block">
        <path d="M15 14.200l6.500-1v6.300H15ZM22.500 13l8.500-1.200v7.700h-8.500ZM15 20.500h6.500v6.300l-6.500-.9ZM22.500 20.500H31v7.700L22.500 27Z" fill="#fff" />
        <circle cx="73.500" cy="17.500" r="5" fill="none" stroke="#fff" strokeWidth="1.400" />
        <path d="M70 21l-6.500 6.500" stroke="#fff" strokeWidth="1.500" />
        <path d="M113.500 13.500h11v13h-11ZM112 15.500h-2.500v9h2.500M126 15.500h2.500v9H126" fill="none" stroke="#fff" strokeWidth="1.200" />
      </svg>
      <div className="ml-auto flex h-[40px] items-center">
        <svg width="75" height="40" viewBox="0 0 75 40" className="block">
          <path d="M4 23l6-6 6 6" fill="none" stroke="#fff" strokeWidth="1.400" />
          <path d="M31 14.500h11v9H31M28 14.500h-1.500v3.500H30v-3.500ZM28.500 18v8.500H36M36 23v3.500" fill="none" stroke="#fff" strokeWidth="1.200" />
          <path d="M38 18.500l5 9H33Z" fill="#f8c32a" />
          <path d="M38 21.500v3M38 25.500v1" stroke="#222" strokeWidth="1.200" />
          <path d="M51 17.500h2.500l4-4v13l-4-4H51Z" fill="none" stroke="#fff" strokeWidth="1.200" />
          <circle cx="62.500" cy="23.500" r="4.500" fill="#da2c3a" />
          <path d="M60.700 21.700l3.600 3.600M64.300 21.700l-3.600 3.600" stroke="#fff" strokeWidth="1.200" />
        </svg>
        <div className="leading-[18px]"><Fit w={25}>DAN</Fit></div>
        <div className="ml-[10px] flex w-[60px] flex-col items-center leading-[18px]">
          <Fit w={28}>12:15</Fit>
          <Fit w={59}>04-09-2020</Fit>
        </div>
        <svg width="20" height="40" viewBox="0 0 20 40" className="ml-[17px] block">
          <path d="M1.600 12.600h15v12h-5l-2.600 2.600-2.500-2.600H1.600Z" fill="none" stroke="#fff" strokeWidth="1.300" />
        </svg>
        <div className="ml-[17px] mr-[2px] h-[40px] w-px bg-[#5a6168]" />
      </div>
    </footer>
  );
}

export default function App() {
  return (
    <div className="relative flex h-[1081px] w-[1917px] flex-col overflow-hidden bg-[#3a6ea5]">
      <StatLogo />
      <main className="flex flex-1 items-start justify-between">
        <div className="-ml-px mt-[4px] grid grid-flow-col auto-cols-[76px] grid-rows-[repeat(8,104px)]">
          {icons.map(([icon, lines, shadow], i) => (
            <DesktopIcon key={i} icon={icon} lines={lines} shadow={shadow} />
          ))}
        </div>
        <div className="mr-[26px] mt-[19px]"><Rules /></div>
      </main>
      <Taskbar />
      <Annotations />
      <ConnectionBar />
    </div>
  );
}
